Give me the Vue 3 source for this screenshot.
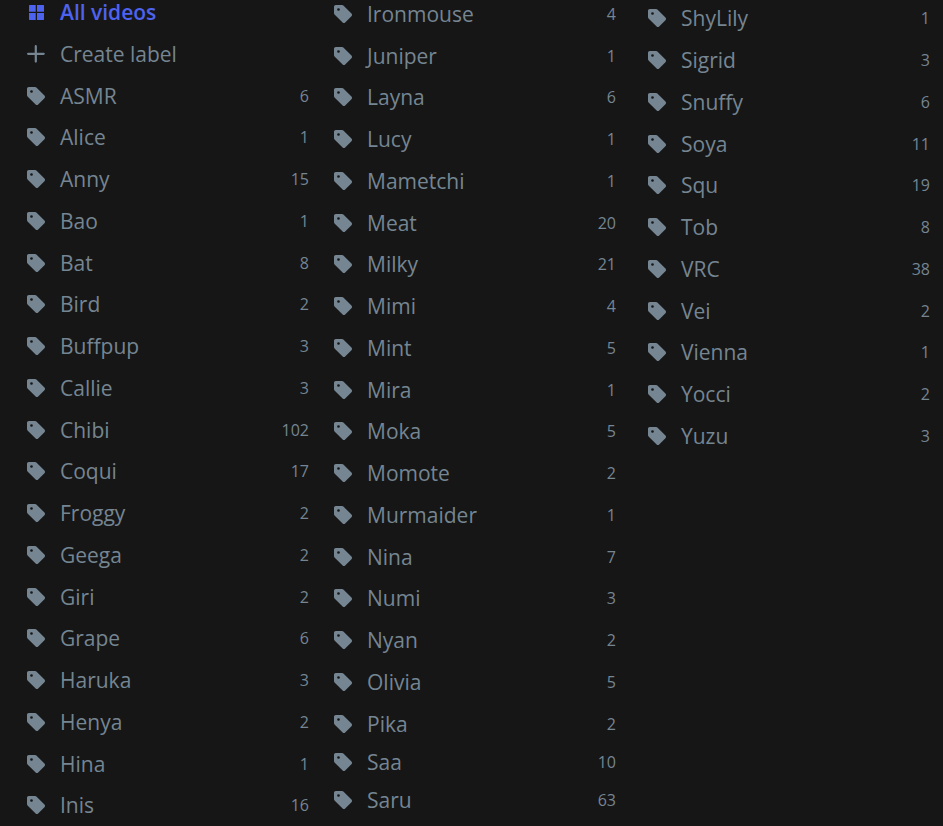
<script setup>
const tag = (entries, tight = []) =>
  entries.map(([name, count]) => ({ name, count, tight: tight.includes(name) }))

const columns = [
  {
    id: 'first',
    actions: true,
    labels: tag([
      ['ASMR', 6], ['Alice', 1], ['Anny', 15], ['Bao', 1], ['Bat', 8], ['Bird', 2],
      ['Buffpup', 3], ['Callie', 3], ['Chibi', 102], ['Coqui', 17], ['Froggy', 2],
      ['Geega', 2], ['Giri', 2], ['Grape', 6], ['Haruka', 3], ['Henya', 2],
      ['Hina', 1], ['Inis', 16],
    ]),
  },
  {
    id: 'second',
    labels: tag([
      ['Ironmouse', 4], ['Juniper', 1], ['Layna', 6], ['Lucy', 1], ['Mametchi', 1],
      ['Meat', 20], ['Milky', 21], ['Mimi', 4], ['Mint', 5], ['Mira', 1], ['Moka', 5],
      ['Momote', 2], ['Murmaider', 1], ['Nina', 7], ['Numi', 3], ['Nyan', 2],
      ['Olivia', 5], ['Pika', 2], ['Saa', 10], ['Saru', 63],
    ], ['Pika', 'Saa']),
  },
  {
    id: 'third',
    labels: tag([
      ['ShyLily', 1], ['Sigrid', 3], ['Snuffy', 6], ['Soya', 11], ['Squ', 19],
      ['Tob', 8], ['VRC', 38], ['Vei', 2], ['Vienna', 1], ['Yocci', 2], ['Yuzu', 3],
    ]),
  },
]
</script>

<template>
  <nav class="labels" aria-label="Video labels">
    <ul v-for="column in columns" :key="column.id" class="column" :class="column.id">
      <template v-if="column.actions">
        <li class="row">
          <a class="item active" href="#all" aria-current="page">
            <svg class="icon" viewBox="0 0 18 18" aria-hidden="true">
              <path d="M2.500 2H8.700V8.700H2V2.500ZM10 2h6.500l.5.5V8.700H10ZM2 10H8.700V17H2.500L2 16.500ZM10 10h7v6.500l-.5.5H10Z" />
            </svg>
            <span class="name">All videos</span>
          </a>
        </li>
        <li class="row">
          <button class="item" type="button">
            <svg class="icon" viewBox="0 0 18 18" aria-hidden="true">
              <path d="M8.800 1.200v15.400M1.100 8.800h15.600" fill="none" stroke="currentColor" stroke-width="2.200" stroke-linecap="round" />
            </svg>
            <span class="name">Create label</span>
          </button>
        </li>
      </template>
      <li v-for="label in column.labels" :key="label.name" class="row" :class="{ tight: label.tight }">
        <a class="item" :href="'#' + label.name">
          <svg class="icon" viewBox="2 2 20 20" aria-hidden="true">
            <path
              fill-rule="evenodd"
              d="M21.410 11.580l-9-9C12.050 2.220 11.550 2 11 2H4c-1.100 0-2 .9-2 2v7c0 .55.22 1.050.59 1.420l9 9c.36.36.86.58 1.410.58s1.050-.22 1.410-.59l7-7c.37-.36.59-.86.59-1.410s-.23-1.060-.59-1.420ZM7 5.500a1.500 1.500 0 1 1 0 3a1.500 1.500 0 1 1 0-3Z"
            />
          </svg>
          <span class="name">{{ label.name }}</span>
          <span class="count">{{ label.count }}</span>
        </a>
      </li>
    </ul>
  </nav>
</template>

<style>
body {
  background: #161616;
}
</style>

<style scoped>
.labels {
  display: flex;
  align-items: flex-start;
  height: 100vh;
  padding: 0 13px 0 27px;
  box-sizing: border-box;
  overflow: hidden;
  background: #161616;
  color: #758592;
  font-family: "Open Sans", "Noto Sans", sans-serif;
  font-size: 21px;
}

.column {
  flex: 1 1 0;
  min-width: 0;
  margin: 0;
  padding: 0;
  list-style: none;
}

.second {
  padding-top: 2px;
  margin-left: 25px;
}

.third {
  padding-top: 6px;
  margin-left: 32px;
}

.row {
  height: 42px;
}

.first .row:nth-child(4n + 3),
.second .row:nth-child(4n + 2),
.third .row:nth-child(4n) {
  height: 41px;
}

.second .row.tight {
  height: 38px;
}

.item {
  display: flex;
  align-items: center;
  width: 100%;
  height: 24px;
  padding: 0;
  border: 0;
  background: none;
  color: inherit;
  font: inherit;
  text-align: left;
  text-decoration: none;
  cursor: pointer;
}

.item.active {
  color: #4d63f0;
  font-weight: 600;
}

.icon {
  flex: none;
  width: 18px;
  height: 18px;
  margin-right: 15px;
  fill: currentColor;
}

.name {
  flex: 1;
  line-height: 24px;
}

.count {
  font-size: 16px;
  line-height: 24px;
}
</style>
